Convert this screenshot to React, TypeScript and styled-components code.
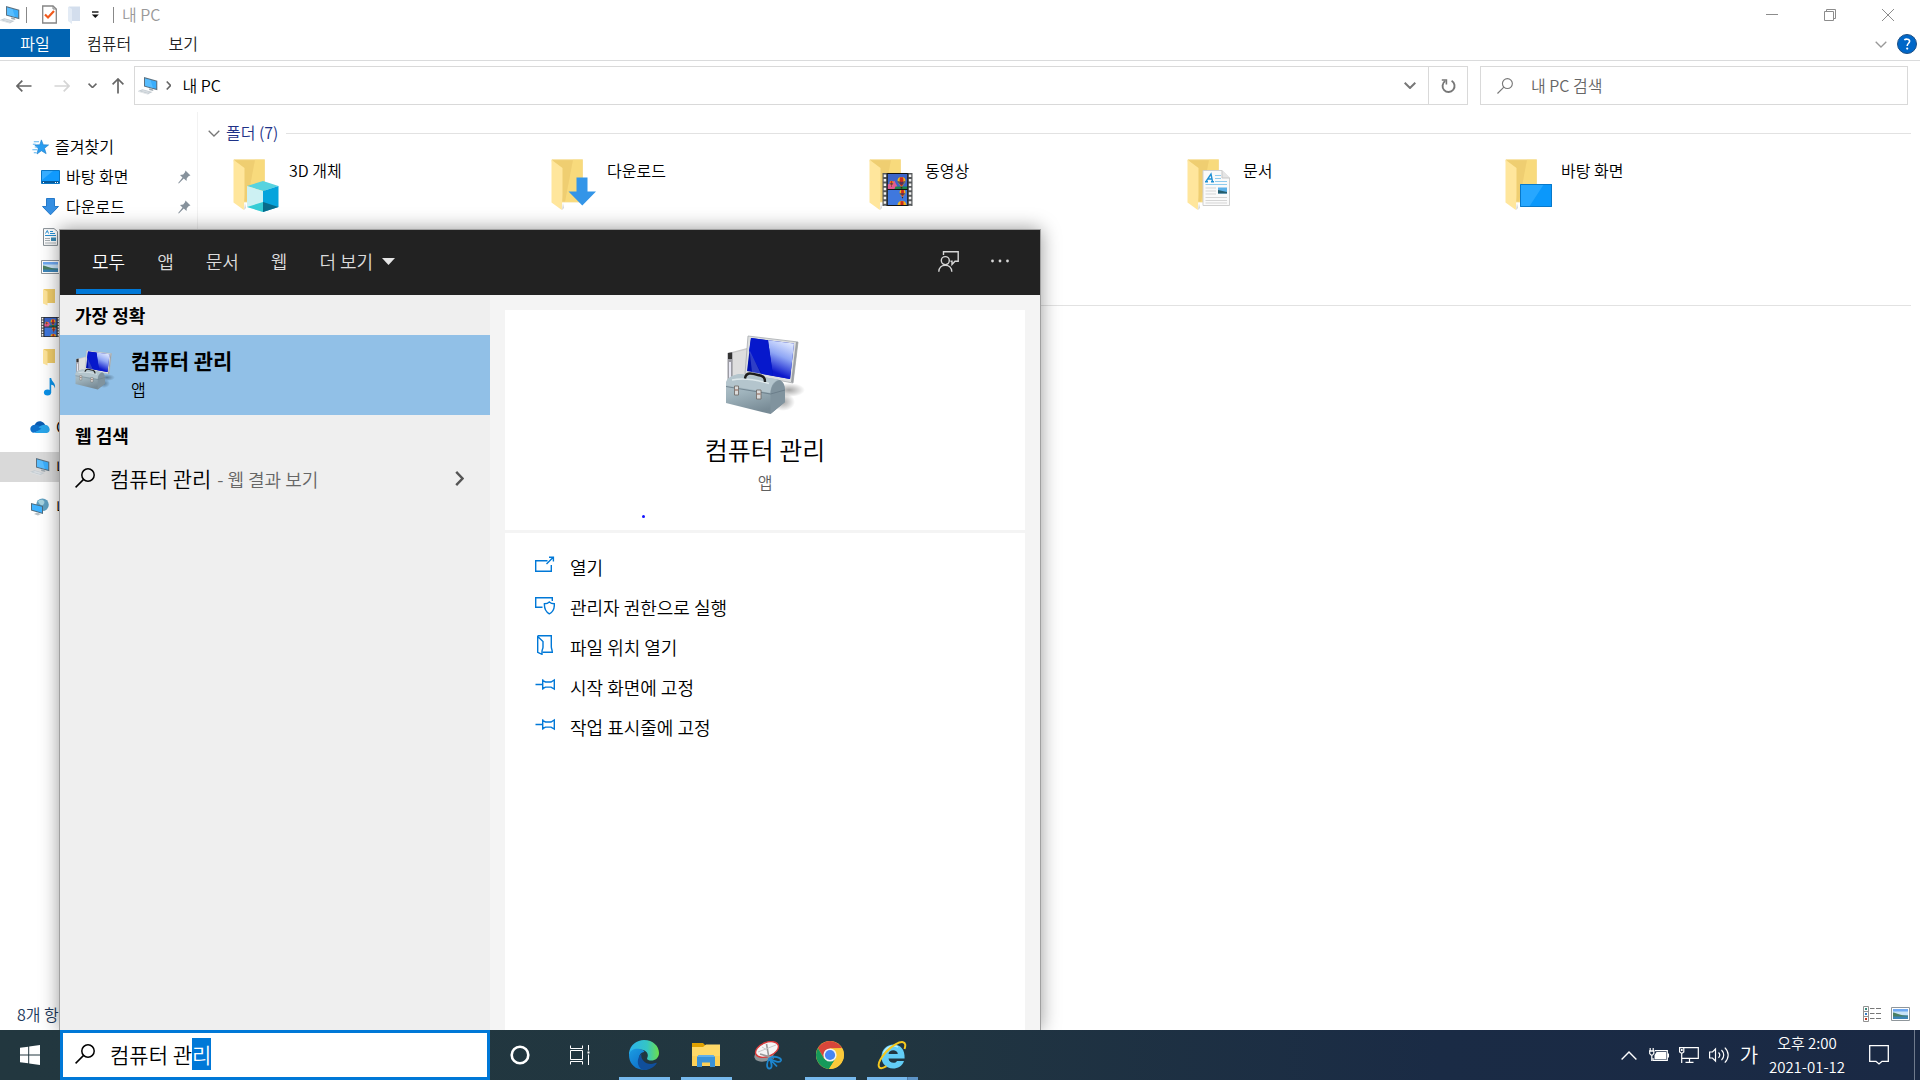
import React, { useEffect, useRef } from 'react';
import styled, { createGlobalStyle } from 'styled-components';

const GlobalStyle = createGlobalStyle`
  *, *::before, *::after { box-sizing: border-box; }
  body {
    margin: 0;
    background: #fff;
    color: #000;
    font-family: "Noto Sans CJK KR", "Noto Sans", sans-serif;
    font-size: 16px;
    font-weight: 350;
    line-height: 24px;
  }
  button {
    margin: 0; padding: 0; border: 0; background: none;
    color: inherit; font: inherit; text-align: left; cursor: default;
  }
  input { font: inherit; }
  svg { display: block; flex: none; }
  ul { list-style: none; margin: 0; padding: 0; }
  h1, h2, p { margin: 0; font-size: inherit; font-weight: inherit; }
`;

/* ---------- layout ---------- */

const Desktop = styled.div`
  position: relative;
  display: flex;
  flex-direction: column;
  min-height: 100vh;
`;

const Explorer = styled.main`
  flex: 1;
  display: flex;
  flex-direction: column;
  background: #fff;
`;

const TitleBar = styled.header`
  display: flex;
  align-items: center;
  height: 29px;
`;

const QuickAccess = styled.div`
  flex: 1;
  display: flex;
  align-items: center;
  color: #999;
`;

const QuickButton = styled.button<{ $w: number }>`
  display: flex;
  align-items: center;
  justify-content: center;
  width: ${p => p.$w}px;
  height: 29px;
`;

const Separator = styled.span`
  width: 1px;
  height: 16px;
  background: #888;
`;

const WindowTitle = styled.h1`
  padding: 0 0 2px 8px;
`;

const CaptionButton = styled.button`
  display: flex;
  align-items: center;
  justify-content: center;
  width: 58px;
  height: 29px;
  color: #8c8c8c;
`;

const CaptionButtons = styled.div`
  display: flex;
  padding-right: 3px;
`;

const Ribbon = styled.nav`
  display: flex;
  align-items: flex-start;
  height: 32px;
  border-bottom: 1px solid #dadbdc;
`;

const RibbonTab = styled.button<{ $file?: boolean }>`
  height: 28px;
  padding: ${p => (p.$file ? '0 20px' : '0 17px')};
  min-width: 70px;
  color: ${p => (p.$file ? '#fff' : '#222')};
  background: ${p => (p.$file ? '#0063b1' : 'transparent')};
  line-height: 28px;
  text-align: center;
`;

const RibbonEnd = styled.div`
  display: flex;
  align-items: center;
  gap: 10px;
  height: 30px;
  margin-left: auto;
  padding-right: 3px;
`;

const AddressRow = styled.div`
  display: flex;
  align-items: center;
  height: 51px;
  padding: 0 12px 2px 0;
`;

const NavButtons = styled.div`
  display: flex;
  align-items: center;
  width: 134px;
  padding-left: 6px;
`;

const NavButton = styled.button<{ $w: number; $dim?: boolean }>`
  display: flex;
  align-items: center;
  justify-content: center;
  width: ${p => p.$w}px;
  height: 39px;
  color: ${p => (p.$dim ? '#d5d5d5' : '#666')};
`;

const AddressBox = styled.div`
  flex: 1;
  display: flex;
  height: 39px;
  border: 1px solid #d9d9d9;
`;

const Crumbs = styled.div`
  flex: 1;
  display: flex;
  align-items: center;
  padding-left: 3px;
`;

const Crumb = styled.button`
  padding: 0 0 2px 11px;
`;

const CrumbArrow = styled.button`
  padding-left: 8px;
`;

const AddressAction = styled.button<{ $line?: boolean }>`
  display: flex;
  align-items: center;
  justify-content: center;
  width: ${p => (p.$line ? 39 : 36)}px;
  border-left: ${p => (p.$line ? '1px solid #d9d9d9' : '0')};
  color: #777;
`;

const FolderSearch = styled.label`
  display: flex;
  align-items: center;
  gap: 18px;
  width: 428px;
  height: 39px;
  margin-left: 12px;
  padding-left: 16px;
  border: 1px solid #d9d9d9;
  color: #777;
  input {
    flex: 1;
    min-width: 0;
    padding: 0 0 2px;
    border: 0;
    outline: 0;
    background: none;
    &::placeholder { color: #666; opacity: 1; }
  }
`;

const Body = styled.div`
  flex: 1;
  display: flex;
`;

const NavPane = styled.nav`
  width: 198px;
  padding-top: 20px;
  border-right: 1px solid #f2f2f2;
`;

const NavGroup = styled.ul`
  margin-bottom: 10px;
`;

const NavItem = styled.button<{ $level: number; $selected?: boolean }>`
  display: flex;
  align-items: center;
  gap: 6px;
  width: 100%;
  height: 30px;
  padding: 0 6px 0 ${p => (p.$level === 1 ? 30 : 41)}px;
  background: ${p => (p.$selected ? '#d9d9d9' : 'transparent')};
  white-space: nowrap;
  span { flex: 1; padding-bottom: 2px; }
`;

const Content = styled.section`
  flex: 1;
  padding: 7px 9px 0 10px;
`;

const GroupHeader = styled.h2`
  display: flex;
  align-items: center;
  gap: 6px;
  height: 28px;
  color: #1e3287;
  &::after {
    content: '';
    flex: 1;
    height: 1px;
    margin-left: 2px;
    background: #e2e2e2;
  }
  span { padding-bottom: 2px; }
`;

const Tiles = styled.ul`
  display: grid;
  grid-template-columns: repeat(5, 318px);
  grid-template-rows: 72px 72px;
  padding: 0 0 0 25px;
`;

const Tile = styled.button`
  display: flex;
  gap: 6px;
  width: 100%;
  height: 72px;
  padding-top: 11px;
  svg { margin-top: 1px; }
`;

const StatusBar = styled.footer`
  display: flex;
  align-items: center;
  justify-content: space-between;
  height: 30px;
  padding: 0 10px 2px 17px;
  color: #1e395b;
`;

const ViewButtons = styled.div`
  display: flex;
  align-items: center;
  gap: 10px;
`;

/* ---------- search flyout ---------- */

const Flyout = styled.section`
  position: absolute;
  top: 229px;
  bottom: 50px;
  left: 59px;
  display: flex;
  flex-direction: column;
  width: 982px;
  border: 1px solid #a0a0a0;
  border-bottom: 0;
  background: #f4f4f4;
  box-shadow: 0 0 18px rgba(0, 0, 0, 0.4);
`;

const Scopes = styled.div`
  display: flex;
  align-items: stretch;
  height: 65px;
  padding: 0 16px;
  background: #222;
  color: #dcdcdc;
  font-size: 18px;
`;

const Scope = styled.button<{ $active?: boolean }>`
  display: flex;
  align-items: center;
  gap: 9px;
  margin-bottom: 1px;
  padding: 0 16px;
  border-top: 3px solid transparent;
  border-bottom: 5px solid ${p => (p.$active ? '#0078d7' : 'transparent')};
  color: ${p => (p.$active ? '#fff' : 'inherit')};
`;

const ScopeTools = styled.div`
  display: flex;
  align-items: center;
  gap: 32px;
  margin-left: auto;
  padding: 0 15px 3px 0;
`;

const Panes = styled.div`
  flex: 1;
  display: flex;
`;

const Results = styled.div`
  width: 430px;
  background: #efefef;
`;

const SectionLabel = styled.h2`
  height: 40px;
  padding-left: 15px;
  font-size: 18px;
  font-weight: 700;
  line-height: 40px;
`;

const BestMatch = styled.button`
  display: flex;
  align-items: flex-start;
  gap: 16px;
  width: 100%;
  height: 80px;
  padding: 11px 15px;
  background: #91c0e7;
`;

const BestText = styled.span`
  display: flex;
  flex-direction: column;
  gap: 3px;
  strong { font-size: 21px; line-height: 28px; font-weight: 700; }
`;

const BestIcon = styled.span`
  padding-top: 4px;
`;

const WebResult = styled.button`
  display: flex;
  align-items: center;
  width: 100%;
  height: 46px;
  padding: 0 26px 0 15px;
  font-size: 21px;
  small { margin-left: 6px; color: #666; font-size: 18px; }
  svg:last-child { margin-left: auto; }
`;

const WebText = styled.span`
  padding-left: 15px;
`;

const Details = styled.div`
  flex: 1;
  display: flex;
  flex-direction: column;
  gap: 3px;
  padding: 15px 15px 0;
`;

const AppCard = styled.div`
  position: relative;
  display: flex;
  flex-direction: column;
  align-items: center;
  height: 220px;
  padding-top: 25px;
  background: #fff;
`;

const AppName = styled.h2`
  margin-top: 16px;
  font-size: 25px;
  line-height: 36px;
`;

const AppKind = styled.p`
  margin-top: 3px;
  color: #606060;
`;

const LoadingDot = styled.span`
  position: absolute;
  left: 137px;
  top: 205px;
  width: 3px;
  height: 3px;
  border-radius: 50%;
  background: #1414ff;
`;

const Actions = styled.ul`
  flex: 1;
  padding: 12px 30px;
  background: #fff;
`;

const Action = styled.button`
  display: flex;
  align-items: center;
  gap: 15px;
  width: 100%;
  height: 40px;
  color: #0078d7;
  font-size: 18px;
  span { padding-top: 3px; color: #000; }
`;

/* ---------- taskbar ---------- */

const Taskbar = styled.footer`
  position: relative;
  display: flex;
  height: 50px;
  background: linear-gradient(90deg, #22373f 0%, #213640 45%, #1a2b45 75%, #1a2944 100%);
  color: #fff;
`;

const TaskButton = styled.button`
  display: flex;
  align-items: center;
  justify-content: center;
  width: 60px;
`;

const TaskSearch = styled.label`
  display: flex;
  align-items: center;
  gap: 15px;
  width: 430px;
  padding: 0 0 2px 12px;
  border: 3px solid #0078d7;
  background: #fff;
  color: #000;
  input {
    flex: 1;
    min-width: 0;
    height: 32px;
    padding: 0;
    border: 0;
    outline: 0;
    font-size: 21px;
    line-height: 32px;
    &::selection { background: #0078d7; color: #fff; }
  }
`;

const Apps = styled.div`
  display: flex;
  padding-left: 3px;
`;

const AppButton = styled.button<{ $running?: boolean; $stacked?: boolean }>`
  display: flex;
  align-items: center;
  justify-content: center;
  width: 62px;
  border-top: 3px solid transparent;
  border-bottom: 3px solid transparent;
  background: ${p =>
    p.$stacked
      ? 'linear-gradient(90deg, #76b9ed 40px, #3f6286 40px, #5c93c6 41px) 6px 100% / 51px 3px no-repeat border-box'
      : p.$running
      ? 'linear-gradient(#76b9ed, #76b9ed) 6px 100% / 51px 3px no-repeat border-box'
      : 'none'};
`;

const Tray = styled.div`
  display: flex;
  align-items: center;
  margin-left: auto;
`;

const TrayButton = styled.button`
  display: flex;
  align-items: center;
  justify-content: center;
  width: 30px;
  height: 50px;
  font-size: 20px;
`;

const Clock = styled.button`
  display: flex;
  flex-direction: column;
  align-items: center;
  width: 100px;
  margin-left: -7px;
  padding-bottom: 1px;
  font-size: 15px;
`;

const ActionCenter = styled.button`
  display: flex;
  align-items: center;
  justify-content: center;
  width: 44px;
  height: 50px;
  margin: 0 13px 0 0;
`;

const ShowDesktop = styled.button`
  width: 6px;
  height: 50px;
  border-left: 1px solid #6f7a8c;
`;

/* ---------- icons ---------- */

const PcIcon = () => (
  <svg width="20" height="18" viewBox="0 0 20 18">
    <path d="M6 0 L19.3 3.8 V13.2 L6 9.6Z" fill="#5a7080" />
    <path d="M7 1.4 L18.2 4.6 V11.8 L7 8.7Z" fill="#3aaefc" />
    <path d="M7 1.4 L12.5 3 L15 10.9 L7 8.7Z" fill="#6cc6ff" opacity=".6" />
    <path d="M11.5 11.2 L14.5 12 L15.5 14 L11 13Z" fill="#9fa9b0" />
    <path d="M0 14 L4.4 12.2 L14.6 15 L10.4 17Z" fill="#c2cad0" />
    <path d="M0 14 L10.4 17 V17.8 L0 14.8Z" fill="#dde1e4" />
    <path d="M2.5 14 L5 13 L12 15 L10 16Z" fill="#d7dde1" />
  </svg>
);

const CheckDocIcon = () => (
  <svg width="15" height="19" viewBox="0 0 15 19">
    <path d="M.7 1 H11 L14.3 4 V18 H.7Z" fill="#fff" stroke="#858585" strokeWidth="1.3" />
    <path d="M11 1 V4 H14" fill="none" stroke="#858585" />
    <path d="M3 9.5 L6 12.5 L12 6" fill="none" stroke="#f0591c" strokeWidth="2.2" />
  </svg>
);

const PaleFolderIcon = () => (
  <svg width="13" height="18" viewBox="0 0 13 18">
    <path d="M1 .5 H12 V15 H1Z" fill="#d3deed" />
    <path d="M0 .5 L4 3 V18 L0 15Z" fill="#e3ebf5" />
  </svg>
);

const DropIcon = () => (
  <svg width="8" height="8" viewBox="0 0 8 8"><path d="M1 1 H7.5" stroke="#111" strokeWidth="1.4" /><path d="M.8 3.6 H7.8 L4.3 7Z" fill="#111" /></svg>
);

const Minimize = () => <svg width="12" height="12"><path d="M0 5.5 H12" stroke="currentColor" /></svg>;
const Restore = () => (
  <svg width="12" height="12" fill="none" stroke="currentColor"><path d="M.5 2.5 H9.5 V11.5 H.5Z M2.5 2.5 V.5 H11.5 V9.5 H9.5" /></svg>
);
const Close = () => <svg width="12" height="12"><path d="M0 0 L12 12 M12 0 L0 12" stroke="currentColor" /></svg>;

const Chevron = ({ w = 12, s = 1.3, color = 'currentColor' }: { w?: number; s?: number; color?: string }) => (
  <svg width={w} height={w / 2 + 1} viewBox="0 0 12 7" fill="none" stroke={color} strokeWidth={s}><path d="M.7 .7 L6 6 L11.3 .7" /></svg>
);

const Right = ({ h, s, color }: { h: number; s: number; color: string }) => (
  <svg width={h * 0.6} height={h} viewBox="0 0 6 10" fill="none" stroke={color} strokeWidth={s}><path d="M.8 .6 L5 5 L.8 9.4" /></svg>
);

const HelpIcon = () => (
  <svg width="20" height="20" viewBox="0 0 20 20">
    <circle cx="10" cy="10" r="9.5" fill="#0067c8" stroke="#1d4f84" />
    <path d="M7.3 6 C8.5 4.8 12.8 4.6 12.6 7.3 C12.5 9.2 10.2 9.4 10.2 12" fill="none" stroke="#fff" strokeWidth="1.6" />
    <circle cx="10.2" cy="14.6" r="1.1" fill="#fff" />
  </svg>
);

const Arrow = ({ r }: { r: number }) => (
  <svg width="16" height="16" viewBox="0 0 16 16" fill="none" stroke="currentColor" strokeWidth="1.7">
    <g transform={`rotate(${r} 8 8)`}><path d="M1 8 H15.5 M6.3 2.6 L1 8 L6.3 13.4" /></g>
  </svg>
);

const RefreshIcon = () => (
  <svg width="15" height="16" viewBox="0 0 15 16" fill="none" stroke="currentColor" strokeWidth="1.9">
    <path d="M10.6 2.8 A6 6 0 1 1 4.2 3" /><path d="M.8 2 H5.4 V6.6" strokeWidth="1.6" />
  </svg>
);

const Magnifier = ({ size, s = 1.5 }: { size: number; s?: number }) => (
  <svg width={size} height={size} viewBox="0 0 20 20" fill="none" stroke="currentColor" strokeWidth={s}>
    <circle cx="13" cy="7" r="6.2" /><path d="M8.6 11.4 L.6 19.4" />
  </svg>
);

const StarIcon = () => (
  <svg width="19" height="18" viewBox="0 0 20 18">
    <path d="M12 1.5 L14 6.6 L19.6 6.8 L15.3 10.4 L17 16 L12 13 L7.4 16.4 L8.6 10.6 L5 6.8 L10.3 6.6Z" fill="#2a9df0" stroke="#1878c4" strokeWidth=".6" />
    <path d="M4 3.5 H9.5 M3 6 H6 M5 9 H8 M2.5 12 H7.5 M4 15 H7" stroke="#5eb4ee" strokeWidth="1.1" />
  </svg>
);

const DesktopIcon = () => (
  <svg width="19" height="14" viewBox="0 0 19 14">
    <path d="M.5 .5 H18.5 V13.5 H.5Z" fill="#109afe" stroke="#0b76c4" />
    <path d="M1 10 L12 1 H1Z" fill="#36adff" />
    <path d="M1 12 H18" stroke="#075a9b" strokeWidth="2" /><path d="M2 12.5 H3 M14 12.5 H17" stroke="#fff" strokeDasharray="1 1" />
  </svg>
);

const DownIcon = () => (
  <svg width="19" height="18" viewBox="0 0 19 18"><path d="M5.5 .5 H13.5 V8.5 H17.5 L9.5 16.8 L1.5 8.5 H5.5Z" fill="#368fe2" stroke="#2579c9" /></svg>
);

const DocIcon = () => (
  <svg width="19" height="18" viewBox="0 0 19 18">
    <path d="M2.5 .6 H13 L16.5 3.5 V17.4 H2.5Z" fill="#fff" stroke="#858d93" />
    <path d="M4.5 5.5 L6.3 2.5 L7.5 5.5 M9 3.5 H12 M9 5.5 H14 M4 7.5 H15" fill="none" stroke="#278fd2" />
    <path d="M4 10.5 H9 M4 12.5 H9 M4 15 H15" stroke="#a9b1b6" /><path d="M10 9.5 H15 V13 H10Z" fill="#3b8bb5" />
  </svg>
);

const PhotoIcon = () => (
  <svg width="19" height="14" viewBox="0 0 19 14">
    <path d="M.5 .5 H18.5 V13.5 H.5Z" fill="#fff" stroke="#8f969b" />
    <path d="M2 2 H17 V12 H2Z" fill="#6fa9f2" /><path d="M2 4.5 H17 V8 H2Z" fill="#c9e3f6" />
    <path d="M2 5.5 C6 6 9 8.5 17 8.8 V10 H2Z" fill="#4b8063" /><path d="M2 9.5 H17 V12 H2Z" fill="#3c85b8" />
  </svg>
);

const SmallFolder = () => (
  <svg width="19" height="18" viewBox="0 0 19 18">
    <path d="M3 1 H14 V15 H3Z" fill="#f0cd6b" /><path d="M2 1 L6.5 3.5 V17.5 L2 15.5Z" fill="#ffe59a" />
  </svg>
);

const Balloon = ({ x, y, s }: { x: number; y: number; s: number }) => (
  <g transform={`translate(${x} ${y}) scale(${s})`}>
    <path d="M-5 0 A5 5 0 1 1 5 0 C5 3 2 5 1 7 H-1 C-2 5 -5 3 -5 0Z" fill="#f0b51c" />
    <path d="M-2 -4.5 C-3 0 -2 4 -1 7 H1 C2 4 3 0 2 -4.5Z" fill="#ce2a1f" />
    <path d="M-5 0 C-2 2 2 2 5 0 C4 3 3 4 2 5 H-2 C-4 3 -5 2 -5 0Z" fill="#27336d" opacity=".7" />
    <path d="M-1 8 H1 V10 H-1Z" fill="#43210f" />
  </g>
);

const FilmArt = () => (
  <>
    <path d="M0 0 H30 V34 H0Z" fill="#55585a" />
    <path d="M2.5 1.5 V34 M27.5 1.5 V34" stroke="#f3f3f3" strokeWidth="2.6" strokeDasharray="2.6 2" />
    <path d="M5 1 H25 V16.5 H5Z" fill="#3c64c8" /><path d="M5 17.5 H25 V33 H5Z" fill="#3f78de" />
    <path d="M5 12 L12 8 L16 16.5 H5Z" fill="#e05a92" /><path d="M13 14 H25 V16.5 H12Z" fill="#1c8648" />
    <Balloon x={19} y={8} s={0.8} /><Balloon x={20} y={20} s={0.6} /><Balloon x={9} y={10} s={0.4} />
    <path d="M15 33 A4.5 4.5 0 1 1 24 33Z" fill="#efb41f" /><path d="M18 33 V29 H21 V33Z" fill="#c9281f" />
    <path d="M5 .5 H25 M5 17 H25 M5 33.5 H25 M4.7 0 V34 M25.3 0 V34" stroke="#111" />
  </>
);

const FilmIcon = () => (<svg width="19" height="20" viewBox="0 0 30 34" preserveAspectRatio="none"><FilmArt /></svg>);

const NoteIcon = () => (
  <svg width="19" height="18" viewBox="0 0 19 18">
    <ellipse cx="6.5" cy="14.5" rx="3.6" ry="3" fill="#0a91e8" />
    <path d="M8.6 14.5 V0 H10.2 C10.5 4 15 4.5 14 10.5 C13.4 7.5 12 7 10.2 6.8 V14.5Z" fill="#0a91e8" />
  </svg>
);

const CloudIcon = () => (
  <svg width="20" height="14" viewBox="0 0 21 14">
    <path d="M5 5 C6 1 11 -.8 14.5 2.8 C15.5 4 16 5 16 5 L10 9Z" fill="#0a5bb0" />
    <path d="M4.8 4.6 C9 4 12 7 16 9 L4 13 C-1 12.5 -1 5 4.8 4.6Z" fill="#0f70c9" />
    <path d="M9 7.5 C13 3 20 4 20.6 9 C21 12 19 13.2 17 13.2 H4 L12 8.8Z" fill="#29a5ea" />
  </svg>
);

const NetIcon = () => (
  <svg width="20" height="18" viewBox="0 0 20 18">
    <circle cx="12.5" cy="6.8" r="6.3" fill="#5e9fc0" /><path d="M8 3 C12 0 17 3 13 7 C10 8 9 5 8 3Z" fill="#a5d2df" />
    <path d="M1 5 L13 8 V16 L1 12.5Z" fill="#4e6c7e" /><path d="M2 6.3 L12 8.8 V14.7 L2 11.8Z" fill="#3fb3ff" />
    <path d="M4 16 L7 14.6 L11 16 L8 17.4Z" fill="#b6c0c6" />
  </svg>
);

const PinIcon = () => (
  <svg width="13" height="14" viewBox="0 0 13 14"><path d="M7.5 .5 L12.5 5.5 L10.8 6 L8.8 8.2 L8.5 11 L5.8 8.6 L.8 13.4 L.2 13 L4.5 7.4 L2 5 L5.2 4.6 L7 2.3Z" fill="#87929c" /></svg>
);

const FolderShape = () => (
  <>
    <path d="M1 .7 H31.5 V43 H8Z" fill="#efce71" stroke="#f5dc93" strokeWidth=".8" />
    <path d="M22 .7 H31.5 V43 H14Z" fill="#fbdd80" opacity=".75" />
    <path d="M.5 .7 L11.5 9 V36 L10.8 51 L.5 43.5Z" fill="#ffe69c" />
    <path d="M11 51 L13 49 L12 44Z" fill="#d6d6d6" />
  </>
);

const TileIcon = ({ kind }: { kind: string }) => (
  <svg width="50" height="54" viewBox="0 0 50 54">
    <FolderShape />
    {kind === 'cube' && (
      <g>
        <path d="M14 27 L30 22 L45.5 27 L30 32Z" fill="#57d3df" />
        <path d="M14 27 L30 32 V53 L14 48Z" fill="#cdf1f3" /><path d="M30 32 L45.5 27 V48 L30 53Z" fill="#06a4dc" />
        <path d="M14 48 L30 43 L30 53Z" fill="#36cdd6" /><path d="M30 43 L45.5 48 L30 53Z" fill="#086b8b" />
      </g>
    )}
    {kind === 'down' && <path d="M25.5 18.5 H36.5 V32.5 H45 L31.3 46.5 L17.5 32.5 H25.5Z" fill="#3395e8" />}
    {kind === 'film' && <g transform="translate(13.5 14) scale(1 .97)"><FilmArt /></g>}
    {kind === 'doc' && (
      <g>
        <path d="M16 11.5 H35 L42.5 19 V46.5 H16Z" fill="#fafafa" stroke="#cfcfcf" />
        <path d="M35 11.5 V19 H42.5" fill="#e5e5e5" stroke="#c7c7c7" />
        <path d="M19 22.5 L24 15 L25.5 22.5 M20.5 20 H25 M18 22.7 H21 M24 22.7 H27" fill="none" stroke="#2191d5" strokeWidth="1.4" />
        <path d="M28 16.5 H34 M28 19.5 H34 M28 22.5 H40 M18.5 25.5 H40" stroke="#8fcbed" strokeWidth="1.2" />
        <path d="M18.5 29 H29 M18.5 32 H29 M18.5 35 H29 M18.5 38.5 H40 M18.5 41.5 H40 M18.5 44 H40" stroke="#d5d5d5" />
        <path d="M31 28.5 H40 V34.5 H31Z" fill="#5cb1e8" /><path d="M31 31 L40 33 V34.5 H31Z" fill="#245d6d" />
      </g>
    )}
    {kind === 'desk' && (
      <g><path d="M15 25 H47 V48 H15Z" fill="#0b98fb" /><path d="M15 25 H39 L24 48 H15Z" fill="#27a7ff" /><path d="M15.5 25.5 H46.5 V47.5 H15.5Z" fill="none" stroke="#0878c9" /></g>
    )}
  </svg>
);

const ToolboxIcon = ({ size, id }: { size: number; id: string }) => (
  <svg width={size} height={size} viewBox="0 0 80 80">
    <defs>
      <linearGradient id={`${id}s`} x1=".6" y1="0" x2=".3" y2="1"><stop offset="0" stopColor="#dfe8ff" /><stop offset=".4" stopColor="#8fa6f5" /><stop offset=".85" stopColor="#0c18cc" /></linearGradient>
      <linearGradient id={`${id}b`} x1="0" y1="0" x2=".4" y2="1"><stop offset="0" stopColor="#bccbd2" /><stop offset=".5" stopColor="#9fb3bc" /><stop offset="1" stopColor="#788b96" /></linearGradient>
      <radialGradient id={`${id}h`}><stop offset="0" stopColor="#000" stopOpacity=".35" /><stop offset="1" stopColor="#000" stopOpacity="0" /></radialGradient>
    </defs>
    <ellipse cx="64" cy="55" rx="16" ry="7" fill={`url(#${id}h)`} />
    <ellipse cx="58" cy="67" rx="12" ry="9" fill={`url(#${id}h)`} />
    <path d="M3 18 L22 13 V44 H3Z" fill="#c9c9c9" /><path d="M8 18 L24 14 V40 L8 44Z" fill="#dedede" />
    <path d="M2.5 18 L7.5 17 V46 H2.5Z" fill="#9b9ba3" /><path d="M3 18 L7 17.5 V24 H3Z" fill="#333" /><path d="M4 27 H6 V45 H4Z" fill="#e8e8f4" />
    <path d="M23 1 L73 7 L68 48 L20 39Z" fill="#dddfe0" stroke="#a7abae" strokeWidth=".8" />
    <path d="M71 7 L73 7 L68 48 L66 47Z" fill="#9da1a4" />
    <path d="M26 3 L69 8.5 L65 44 L22 36Z" fill="#0011b0" />
    <path d="M43 5.2 L69 8.5 L65 44 L48 41Z" fill={`url(#${id}s)`} />
    <path d="M26 3 L43 5.2 L48 41 L37 39 L24 16Z" fill="#0618cc" /><path d="M24.5 15 L36 39 L27 37Z" fill="#6576e0" opacity=".45" />
    <path d="M1 48 C1.5 42 9 40 15 39 L50 44 C58 45 60 50 60 56 L60 67 L45.5 79 L1 68Z" fill={`url(#${id}b)`} />
    <path d="M1 48 C3 41 12 39 15 39 L54 44.5 C48 46 45.5 52 45.5 58 L1 50Z" fill="#b4c5cd" />
    <path d="M45.5 58 C46 50 51 45 55 45 C59 47 60 52 60 56 V67 L45.5 79Z" fill="#80939e" />
    <path d="M1 51.5 L45.5 59 L60 55" fill="none" stroke="#667985" strokeWidth=".8" />
    <path d="M7 45 C19 42.5 34 45.5 44 48.5" fill="none" stroke="#e7f0f3" strokeWidth="1.6" opacity=".8" />
    <path d="M20 43.5 C21 37 26 38 33 40 C39 41 40 43 40 47" fill="none" stroke="#1d1d1d" strokeWidth="2.4" />
    <path d="M9.5 51 H13.5 V60 H9.5Z M31.5 55 H36 V64 H31.5Z" fill="#dcdcdc" stroke="#6d6560" strokeWidth=".8" />
    <path d="M10 55 H13 M32 59 H35.5" stroke="#8c5f4f" strokeWidth="1.2" />
  </svg>
);

const FeedbackIcon = () => (
  <svg width="21" height="21" viewBox="0 0 21 21" fill="none" stroke="#d6d6d6" strokeWidth="1.4">
    <path d="M5.5 4 V.8 H20.2 V10.2 H17 L14 13.5 V10.2 H12.5" /><circle cx="7.3" cy="9.6" r="4" /><path d="M.8 20.8 C1 12 13.5 12 13.8 20.8" />
  </svg>
);

const DotsIcon = () => (<svg width="18" height="4"><g fill="#d6d6d6"><circle cx="1.5" cy="2" r="1.4" /><circle cx="9" cy="2" r="1.4" /><circle cx="16.5" cy="2" r="1.4" /></g></svg>);

const ActionIcon = ({ kind }: { kind: string }) => (
  <svg width="20" height="20" viewBox="0 0 20 20" fill="none" stroke="currentColor" strokeWidth="1.4">
    {kind === 'open' && <><path d="M12.5 5.7 H.7 V16.3 H16.3 V10" /><path d="M11.5 9 L18 2.5 M14 2.2 H18.4 V6.5" /></>}
    {kind === 'admin' && <><path d="M7.5 12.3 H.7 V2.7 H17.3 V6" /><path d="M14.3 7 C16 8.6 17.6 8.8 19.3 8.8 C19.6 13.5 18 17 14.3 18.8 C10.8 17 9.2 13.5 9.4 8.8 C11 8.8 12.8 8.6 14.3 7Z" /></>}
    {kind === 'folder' && <><path d="M2.7 .8 H16.3 V11.5 C16.3 14 17.3 14.5 17.3 17.3 H7.5" /><path d="M2.7 .8 V17.3 L7 19.3 V16.5 C7 14.5 8 14 8 12 V6.5 L2.7 1.5" /></>}
    {kind === 'pin' && <path d="M.5 9.5 H7.5 M7.7 4.3 V14.8 M7.7 5.7 L10.5 7 H16 L19.3 5 V14.1 L16 12.1 H10.5 L7.7 13.5" />}
  </svg>
);

const StartIcon = () => (
  <svg width="20" height="20" viewBox="0 0 20 20" fill="#fff"><path d="M0 2.8 L8.2 1.7 V9.5 H0Z M9.2 1.5 L20 0 V9.5 H9.2Z M0 10.5 H8.2 V18.3 L0 17.2Z M9.2 10.5 H20 V20 L9.2 18.5Z" /></svg>
);

const TaskViewIcon = () => (
  <svg width="20" height="20" viewBox="0 0 20 20" fill="none" stroke="#fff"><path d="M.5 .5 V3.5 H12.5 V.5 M.5 19.5 V16.5 H12.5 V19.5 M.5 5.5 H12.5 V14.5 H.5Z M18.5 0 V20" /><path d="M17 6 H20 V9 H17Z" fill="#fff" stroke="#22373f" /></svg>
);

const EdgeIcon = () => (
  <svg width="30" height="30" viewBox="0 0 30 30">
    <defs>
      <linearGradient id="eg1" x1="0" x2="1"><stop offset="0" stopColor="#2bb3ee" /><stop offset=".6" stopColor="#35c5c4" /><stop offset="1" stopColor="#6ce04b" /></linearGradient>
      <linearGradient id="eg2" x1="0" y1="0" x2="1" y2="1"><stop offset="0" stopColor="#1b9de2" /><stop offset="1" stopColor="#0a5fc0" /></linearGradient>
    </defs>
    <path d="M0 13 C1 5 8 0 15 0 C24 0 30 6 30 13 C30 18 26 20.5 22.5 20.5 C18 20.5 17.5 18.8 18.6 17 C20 13 16 9.5 11 9.5 C6 9.5 2 11 0 16Z" fill="url(#eg1)" />
    <path d="M0 15 C1 9 7 8 11 9 C15 10 16 12 14.8 12 C10 13 9 18 11.5 22 C14 26 20 27.5 25 25 C20 30.5 15 30 12 29.6 C4 28 0 22 0 15Z" fill="url(#eg2)" />
    <path d="M12.5 13.5 C11 19 16 24 22 24 C25 24 26.5 22.5 27.8 22.8 C27.5 25 22 30 15 30 C9 29 6 20 12.5 13.5Z" fill="#104f9c" />
  </svg>
);

const ExplorerIcon = () => (
  <svg width="28" height="24" viewBox="0 0 28 24">
    <path d="M0 0 H11 L13.5 2.5 V5 H0Z" fill="#e0a100" /><path d="M0 4 H11 L14 1.5 H28 V23 H0Z" fill="#ffd968" /><path d="M0 13 H28 V22.5 H0Z" fill="#fbc94a" opacity=".6" />
    <path d="M5 24 V14 L7 12 H21 L23 14 V24 H18 V19.5 H10 V24Z" fill="#3a92d8" /><path d="M7 12 H21 L23 14 H5Z" fill="#62b0ea" />
  </svg>
);

const SnipIcon = () => (
  <svg width="28" height="29" viewBox="0 0 28 29">
    <ellipse cx="10" cy="14.5" rx="9.8" ry="6" fill="#8d9599" transform="rotate(-12 10 14.5)" />
    <ellipse cx="13" cy="8.5" rx="12" ry="7" fill="#f5f5f5" stroke="#d83a3a" strokeWidth="1.4" transform="rotate(-22 13 8.5)" />
    <path d="M12.5 3 L15 17 M6 13 L20 17" stroke="#999" strokeWidth="1.6" /><path d="M4 11 L22 4 M13 9 L8 6" stroke="#c8c8c8" />
    <g fill="none" stroke="#1d86cf" strokeWidth="1.8"><path d="M15.5 17.5 C20 14 27.5 16.5 27 19.5 C26 22.5 20 20 15.5 17.5Z" /><path d="M15.5 17.5 C12.5 21 12 27.5 15.5 27.5 C19 27.5 17.5 21 15.5 17.5 L23 25.5" /></g>
  </svg>
);

const ChromeIcon = () => (
  <svg width="28" height="28" viewBox="0 0 28 28">
    <circle cx="14" cy="14" r="14" fill="#fbc93a" />
    <path d="M1.9 7 A14 14 0 0 1 26.1 7 L14 7.5 L8 17.5Z" fill="#d8463a" /><path d="M1.9 7 A14 14 0 0 0 13 28 L20 17 L8 17.5Z" fill="#16995a" />
    <path d="M14 7.5 H26.2 A14 14 0 0 1 13 28 L20 17Z" fill="#fbc93a" />
    <circle cx="14" cy="14" r="6.6" fill="#f2f2f2" /><circle cx="14" cy="14" r="5.1" fill="#4685f4" />
  </svg>
);

const IeIcon = () => (
  <svg width="30" height="29" viewBox="0 0 30 29">
    <path d="M27.6 17.5 H11.5 C12 22.5 18.5 23 20 20 H27 C25 25.5 21 27.5 16 27.5 C9 27.5 4.5 22.5 4.5 15.8 C4.5 8.5 10 3.5 16.5 3.5 C23.5 3.5 28 8.5 27.6 17.5Z M20.8 13 C20.5 8 12 8 11.5 13Z" fill="#62cdf6" fillRule="evenodd" />
    <path d="M6.5 12 C9 6 16 3.5 21 6" fill="none" stroke="#b3ecff" strokeWidth="1.6" />
    <path d="M27.5 8 C28.8 4.5 28.5 1.8 26 1.2 C22.5 .5 15 4.5 9 11 C3 18 .3 24 2.5 26.5 C3.8 27.8 6.5 27 9.5 25.2" fill="none" stroke="#f6c91e" strokeWidth="2" />
  </svg>
);

const TrayIcon = ({ kind }: { kind: string }) => (
  <svg width="20" height="20" viewBox="0 0 20 20" fill="none" stroke="#fff" strokeWidth="1.2">
    {kind === 'battery' && <><path d="M6 5.7 H18.3 V15.3 H4 V13" /><path d="M7.5 7 H17.2 V14.2 H5.5 V10Z" fill="#fff" stroke="none" /><path d="M19.4 8.5 V12.5 M0 6 H5.5 M1.2 3 V5.5 M4.2 3 V5.5 M2.8 10 V16" /><path d="M.7 6 H4.8 V8.5 L3.6 10 H1.9 L.7 8.5Z" /></>}
    {kind === 'network' && <><path d="M5 2.7 H19.3 V13.3 H2.8 M10.5 13.5 V17 M6.5 17.3 H14.5 M2.7 8 V18" /><path d="M.6 2.6 H4.8 V7 L3.5 8 H2 L.6 7Z" /><path d="M2 4 H3.6 V6 H2Z" fill="#fff" stroke="none" /></>}
    {kind === 'volume' && <><path d="M.6 7 H3.5 L6.5 4 V16 L3.5 13 H.6Z" /><path d="M9.5 7.5 C11 9 11 11.2 9.5 12.8 M12.5 5 C15.5 8 15.5 12.2 12.5 15.2 M15.8 2.6 C20.3 7 20.3 13 15.8 17.6" /></>}
  </svg>
);

const NoticeIcon = () => (
  <svg width="20" height="20" viewBox="0 0 20 20" fill="none" stroke="#fff" strokeWidth="1.3"><path d="M.7 .7 H19.3 V16.3 H13 L10 19 L7 16.3 H.7Z" /></svg>
);

const ListViewIcon = () => (
  <svg width="18" height="16" viewBox="0 0 18 16" fill="none"><path d="M.5 .5 H5.5 V15.5 H.5Z M.5 5.5 H5.5 M.5 10.5 H5.5" stroke="#929292" /><path d="M7 2.5 H11.5 M13 2.5 H18 M7 7.5 H11.5 M13 7.5 H18 M7 12.5 H11.5 M13 12.5 H18" stroke="#777" /><path d="M2 2 H4 V4 H2Z" fill="#3a8a7d" /><path d="M2 7 H4 V9 H2Z" fill="#397ec5" /><path d="M2 12 H4 V14 H2Z" fill="#c3331f" /></svg>
);

/* ---------- data ---------- */

const pinnedItems = [
  { label: '바탕 화면', icon: <DesktopIcon /> },
  { label: '다운로드', icon: <DownIcon /> },
];

/* entries whose names lie behind the search flyout */
const coveredItems = [
  { label: '문서', icon: <DocIcon /> },
  { label: '사진', icon: <PhotoIcon /> },
  { label: '폴더 1', icon: <SmallFolder /> },
  { label: '동영상', icon: <FilmIcon /> },
  { label: '폴더 2', icon: <SmallFolder /> },
  { label: '음악', icon: <NoteIcon /> },
];

const folders = [
  { label: '3D 개체', kind: 'cube' },
  { label: '다운로드', kind: 'down' },
  { label: '동영상', kind: 'film' },
  { label: '문서', kind: 'doc' },
  { label: '바탕 화면', kind: 'desk' },
];

const actions = [
  { label: '열기', kind: 'open' },
  { label: '관리자 권한으로 실행', kind: 'admin' },
  { label: '파일 위치 열기', kind: 'folder' },
  { label: '시작 화면에 고정', kind: 'pin' },
  { label: '작업 표시줄에 고정', kind: 'pin' },
];

const apps = [
  { name: 'Edge', icon: <EdgeIcon />, running: true },
  { name: '파일 탐색기', icon: <ExplorerIcon />, running: true },
  { name: '캡처 도구', icon: <SnipIcon /> },
  { name: 'Chrome', icon: <ChromeIcon />, running: true },
  { name: 'Internet Explorer', icon: <IeIcon />, running: true, stacked: true },
];

/* ---------- parts ---------- */

function ExplorerWindow() {
  return (
    <Explorer>
      <TitleBar>
        <QuickAccess>
          <PcIcon />
          <QuickButton $w={6} aria-label="창 메뉴" />
          <Separator />
          <QuickButton $w={44} aria-label="속성"><CheckDocIcon /></QuickButton>
          <QuickButton $w={6} aria-label="새 폴더"><PaleFolderIcon /></QuickButton>
          <QuickButton $w={36} aria-label="사용자 지정"><DropIcon /></QuickButton>
          <Separator />
          <WindowTitle>내 PC</WindowTitle>
        </QuickAccess>
        <CaptionButtons>
          <CaptionButton aria-label="최소화"><Minimize /></CaptionButton>
          <CaptionButton aria-label="이전 크기로"><Restore /></CaptionButton>
          <CaptionButton aria-label="닫기"><Close /></CaptionButton>
        </CaptionButtons>
      </TitleBar>
      <Ribbon>
        <RibbonTab $file>파일</RibbonTab>
        <RibbonTab>컴퓨터</RibbonTab>
        <RibbonTab>보기</RibbonTab>
        <RibbonEnd>
          <button aria-label="리본 확장"><Chevron color="#999" /></button>
          <button aria-label="도움말"><HelpIcon /></button>
        </RibbonEnd>
      </Ribbon>
      <AddressRow>
        <NavButtons>
          <NavButton $w={36} aria-label="뒤로"><Arrow r={0} /></NavButton>
          <NavButton $w={40} $dim aria-label="앞으로"><Arrow r={180} /></NavButton>
          <NavButton $w={20} aria-label="최근 위치"><Chevron w={9} s={2} /></NavButton>
          <NavButton $w={32} aria-label="위로"><Arrow r={90} /></NavButton>
        </NavButtons>
        <AddressBox>
          <Crumbs>
            <PcIcon />
            <CrumbArrow aria-label="펼치기"><Right h={9} s={1.8} color="#666" /></CrumbArrow>
            <Crumb>내 PC</Crumb>
          </Crumbs>
          <AddressAction aria-label="이전 위치"><Chevron w={12} s={2} /></AddressAction>
          <AddressAction $line aria-label="새로 고침"><RefreshIcon /></AddressAction>
        </AddressBox>
        <FolderSearch>
          <Magnifier size={16} s={1.4} />
          <input type="text" placeholder="내 PC 검색" aria-label="내 PC 검색" />
        </FolderSearch>
      </AddressRow>
      <Body>
        <NavPane>
          <NavGroup>
            <li><NavItem $level={1}><StarIcon /><span>즐겨찾기</span></NavItem></li>
            {pinnedItems.map(q => (
              <li key={q.label}><NavItem $level={2}>{q.icon}<span>{q.label}</span><PinIcon /></NavItem></li>
            ))}
            {coveredItems.map(q => (
              <li key={q.label}><NavItem $level={2} aria-label={q.label}>{q.icon}</NavItem></li>
            ))}
          </NavGroup>
          <NavGroup><li><NavItem $level={1}><CloudIcon /><span>OneDrive</span></NavItem></li></NavGroup>
          <NavGroup><li><NavItem $level={1} $selected><PcIcon /><span>내 PC</span></NavItem></li></NavGroup>
          <NavGroup><li><NavItem $level={1}><NetIcon /><span>네트워크</span></NavItem></li></NavGroup>
        </NavPane>
        <Content>
          <GroupHeader><Chevron color="#777" /><span>폴더 (7)</span></GroupHeader>
          <Tiles>
            {folders.map(f => (
              <li key={f.label}><Tile><TileIcon kind={f.kind} /><span>{f.label}</span></Tile></li>
            ))}
          </Tiles>
          <GroupHeader aria-label="장치 및 드라이브"><Chevron color="#777" /></GroupHeader>
        </Content>
      </Body>
      <StatusBar>
        <span>8개 항목</span>
        <ViewButtons>
          <button aria-label="자세히"><ListViewIcon /></button>
          <button aria-label="큰 아이콘"><PhotoIcon /></button>
        </ViewButtons>
      </StatusBar>
    </Explorer>
  );
}

function SearchFlyout() {
  return (
    <Flyout aria-label="검색">
      <Scopes>
        <Scope $active>모두</Scope>
        <Scope>앱</Scope>
        <Scope>문서</Scope>
        <Scope>웹</Scope>
        <Scope>더 보기<svg width="13" height="7"><path d="M0 0 H13 L6.5 7Z" fill="#e6e6e6" /></svg></Scope>
        <ScopeTools>
          <button aria-label="피드백"><FeedbackIcon /></button>
          <button aria-label="옵션"><DotsIcon /></button>
        </ScopeTools>
      </Scopes>
      <Panes>
        <Results>
          <SectionLabel>가장 정확</SectionLabel>
          <BestMatch>
            <BestIcon><ToolboxIcon size={40} id="small" /></BestIcon>
            <BestText><strong>컴퓨터 관리</strong><span>앱</span></BestText>
          </BestMatch>
          <SectionLabel>웹 검색</SectionLabel>
          <WebResult>
            <Magnifier size={20} />
            <WebText>컴퓨터 관리<small>- 웹 결과 보기</small></WebText>
            <Right h={15} s={1.6} color="#555" />
          </WebResult>
        </Results>
        <Details>
          <AppCard>
            <ToolboxIcon size={80} id="large" />
            <AppName>컴퓨터 관리</AppName>
            <AppKind>앱</AppKind>
            <LoadingDot />
          </AppCard>
          <Actions>
            {actions.map(a => (
              <li key={a.label}><Action><ActionIcon kind={a.kind} /><span>{a.label}</span></Action></li>
            ))}
          </Actions>
        </Details>
      </Panes>
    </Flyout>
  );
}

function SystemTaskbar() {
  const query = useRef<HTMLInputElement>(null);
  useEffect(() => {
    const box = query.current;
    if (!box) return;
    box.focus({ preventScroll: true });
    box.setSelectionRange(box.value.length - 1, box.value.length);
  }, []);
  return (
    <Taskbar>
      <TaskButton aria-label="시작"><StartIcon /></TaskButton>
      <TaskSearch>
        <Magnifier size={20} />
        <input ref={query} type="text" defaultValue="컴퓨터 관리" aria-label="검색하려면 여기에 입력" spellCheck={false} />
      </TaskSearch>
      <TaskButton aria-label="Cortana">
        <svg width="20" height="20"><circle cx="10" cy="10" r="8.3" fill="none" stroke="#fff" strokeWidth="2.6" /></svg>
      </TaskButton>
      <TaskButton aria-label="작업 보기"><TaskViewIcon /></TaskButton>
      <Apps>
        {apps.map(a => (
          <AppButton key={a.name} aria-label={a.name} $running={a.running} $stacked={a.stacked}>{a.icon}</AppButton>
        ))}
      </Apps>
      <Tray>
        <TrayButton aria-label="숨겨진 아이콘 표시">
          <svg width="16" height="9" fill="none" stroke="#fff" strokeWidth="1.4"><path d="M.6 8.4 L8 1 L15.4 8.4" /></svg>
        </TrayButton>
        <TrayButton aria-label="배터리"><TrayIcon kind="battery" /></TrayButton>
        <TrayButton aria-label="네트워크"><TrayIcon kind="network" /></TrayButton>
        <TrayButton aria-label="볼륨"><TrayIcon kind="volume" /></TrayButton>
        <TrayButton>가</TrayButton>
        <Clock><span>오후 2:00</span><span>2021-01-12</span></Clock>
        <ActionCenter aria-label="알림 센터"><NoticeIcon /></ActionCenter>
        <ShowDesktop aria-label="바탕 화면 보기" />
      </Tray>
    </Taskbar>
  );
}

export default function App() {
  return (
    <Desktop>
      <GlobalStyle />
      <ExplorerWindow />
      <SearchFlyout />
      <SystemTaskbar />
    </Desktop>
  );
}
